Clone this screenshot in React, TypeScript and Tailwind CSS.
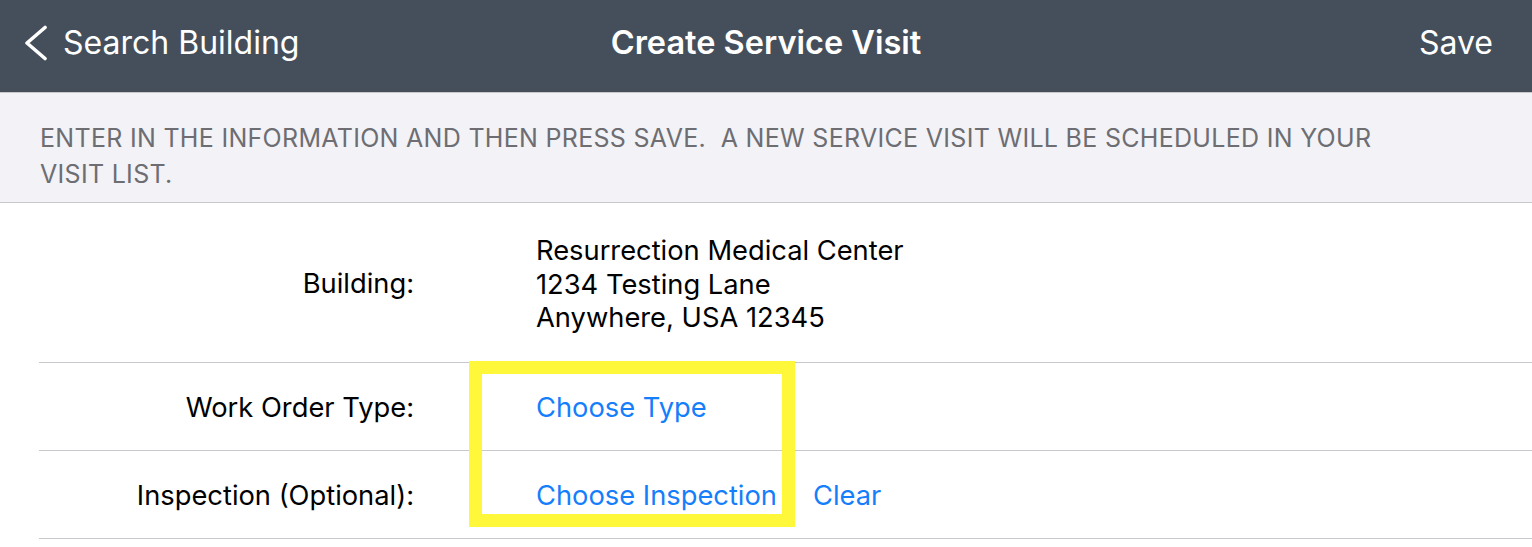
const font = { fontFamily: "Inter, 'Noto Sans', sans-serif" };

function Row({
  label,
  children,
  className = "",
}: {
  label: string;
  children: React.ReactNode;
  className?: string;
}) {
  return (
    <div className={`flex items-center pt-[4px] ${className}`}>
      <div className="w-[414px] shrink-0 text-right text-[27.3px] text-black">{label}</div>
      <div className="pl-[122px]">{children}</div>
    </div>
  );
}

export default function App() {
  return (
    <div className="relative h-[547px] w-[1532px] overflow-hidden bg-white" style={font}>
      {/* nav bar */}
      <div className="relative flex h-[92px] items-center justify-between bg-[#454f5b] pb-[6px] pl-[24px] pr-[39px] text-white">
        <div className="flex items-center gap-[15px]">
          <svg width="24" height="36" viewBox="0 0 24 36" fill="none" stroke="currentColor" strokeWidth="3.6" strokeLinecap="round" strokeLinejoin="round">
            <polyline points="21,2.5 3,18 21,33.5" />
          </svg>
          <span className="text-[32px] leading-none">Search Building</span>
        </div>
        <div className="absolute left-1/2 top-[27px] -translate-x-1/2 text-[32.5px] font-semibold leading-none">Create Service Visit</div>
        <span className="text-[32px] leading-none">Save</span>
      </div>

      {/* instructions */}
      <div className="border-y border-[#c8c7cc] bg-[#f2f2f7] px-[40px] pb-[10px] pt-[27px] text-[25px] uppercase leading-[36px] tracking-[0.3px] text-[#6d6d72]">
        Enter in the information and then press save.&nbsp; A new service visit will be scheduled in your
        <br />
        visit list.
      </div>

      {/* form */}
      <div className="relative">
        <Row label="Building:" className="h-[159px]">
          <div className="text-[27.3px] leading-[33.5px] text-black">
            <div>Resurrection Medical Center</div>
            <div>1234 Testing Lane</div>
            <div>Anywhere, USA 12345</div>
          </div>
        </Row>
        <div className="ml-[39px] border-t border-[#c8c7cc]" />
        <Row label="Work Order Type:" className="h-[87px]">
          <span className="text-[27.3px] text-[#157efb]">Choose Type</span>
        </Row>
        <div className="ml-[39px] border-t border-[#c8c7cc]" />
        <Row label="Inspection (Optional):" className="h-[87px]">
          <div className="flex items-center gap-[36px] text-[27.3px] text-[#157efb]">
            <span>Choose Inspection</span>
            <span>Clear</span>
          </div>
        </Row>
        <div className="ml-[39px] border-t border-[#c8c7cc]" />

        {/* highlight annotation */}
        <div className="pointer-events-none absolute left-[469px] top-[158px] h-[166px] w-[326px] border-[13px] border-[#fff83a]" />
      </div>
    </div>
  );
}
